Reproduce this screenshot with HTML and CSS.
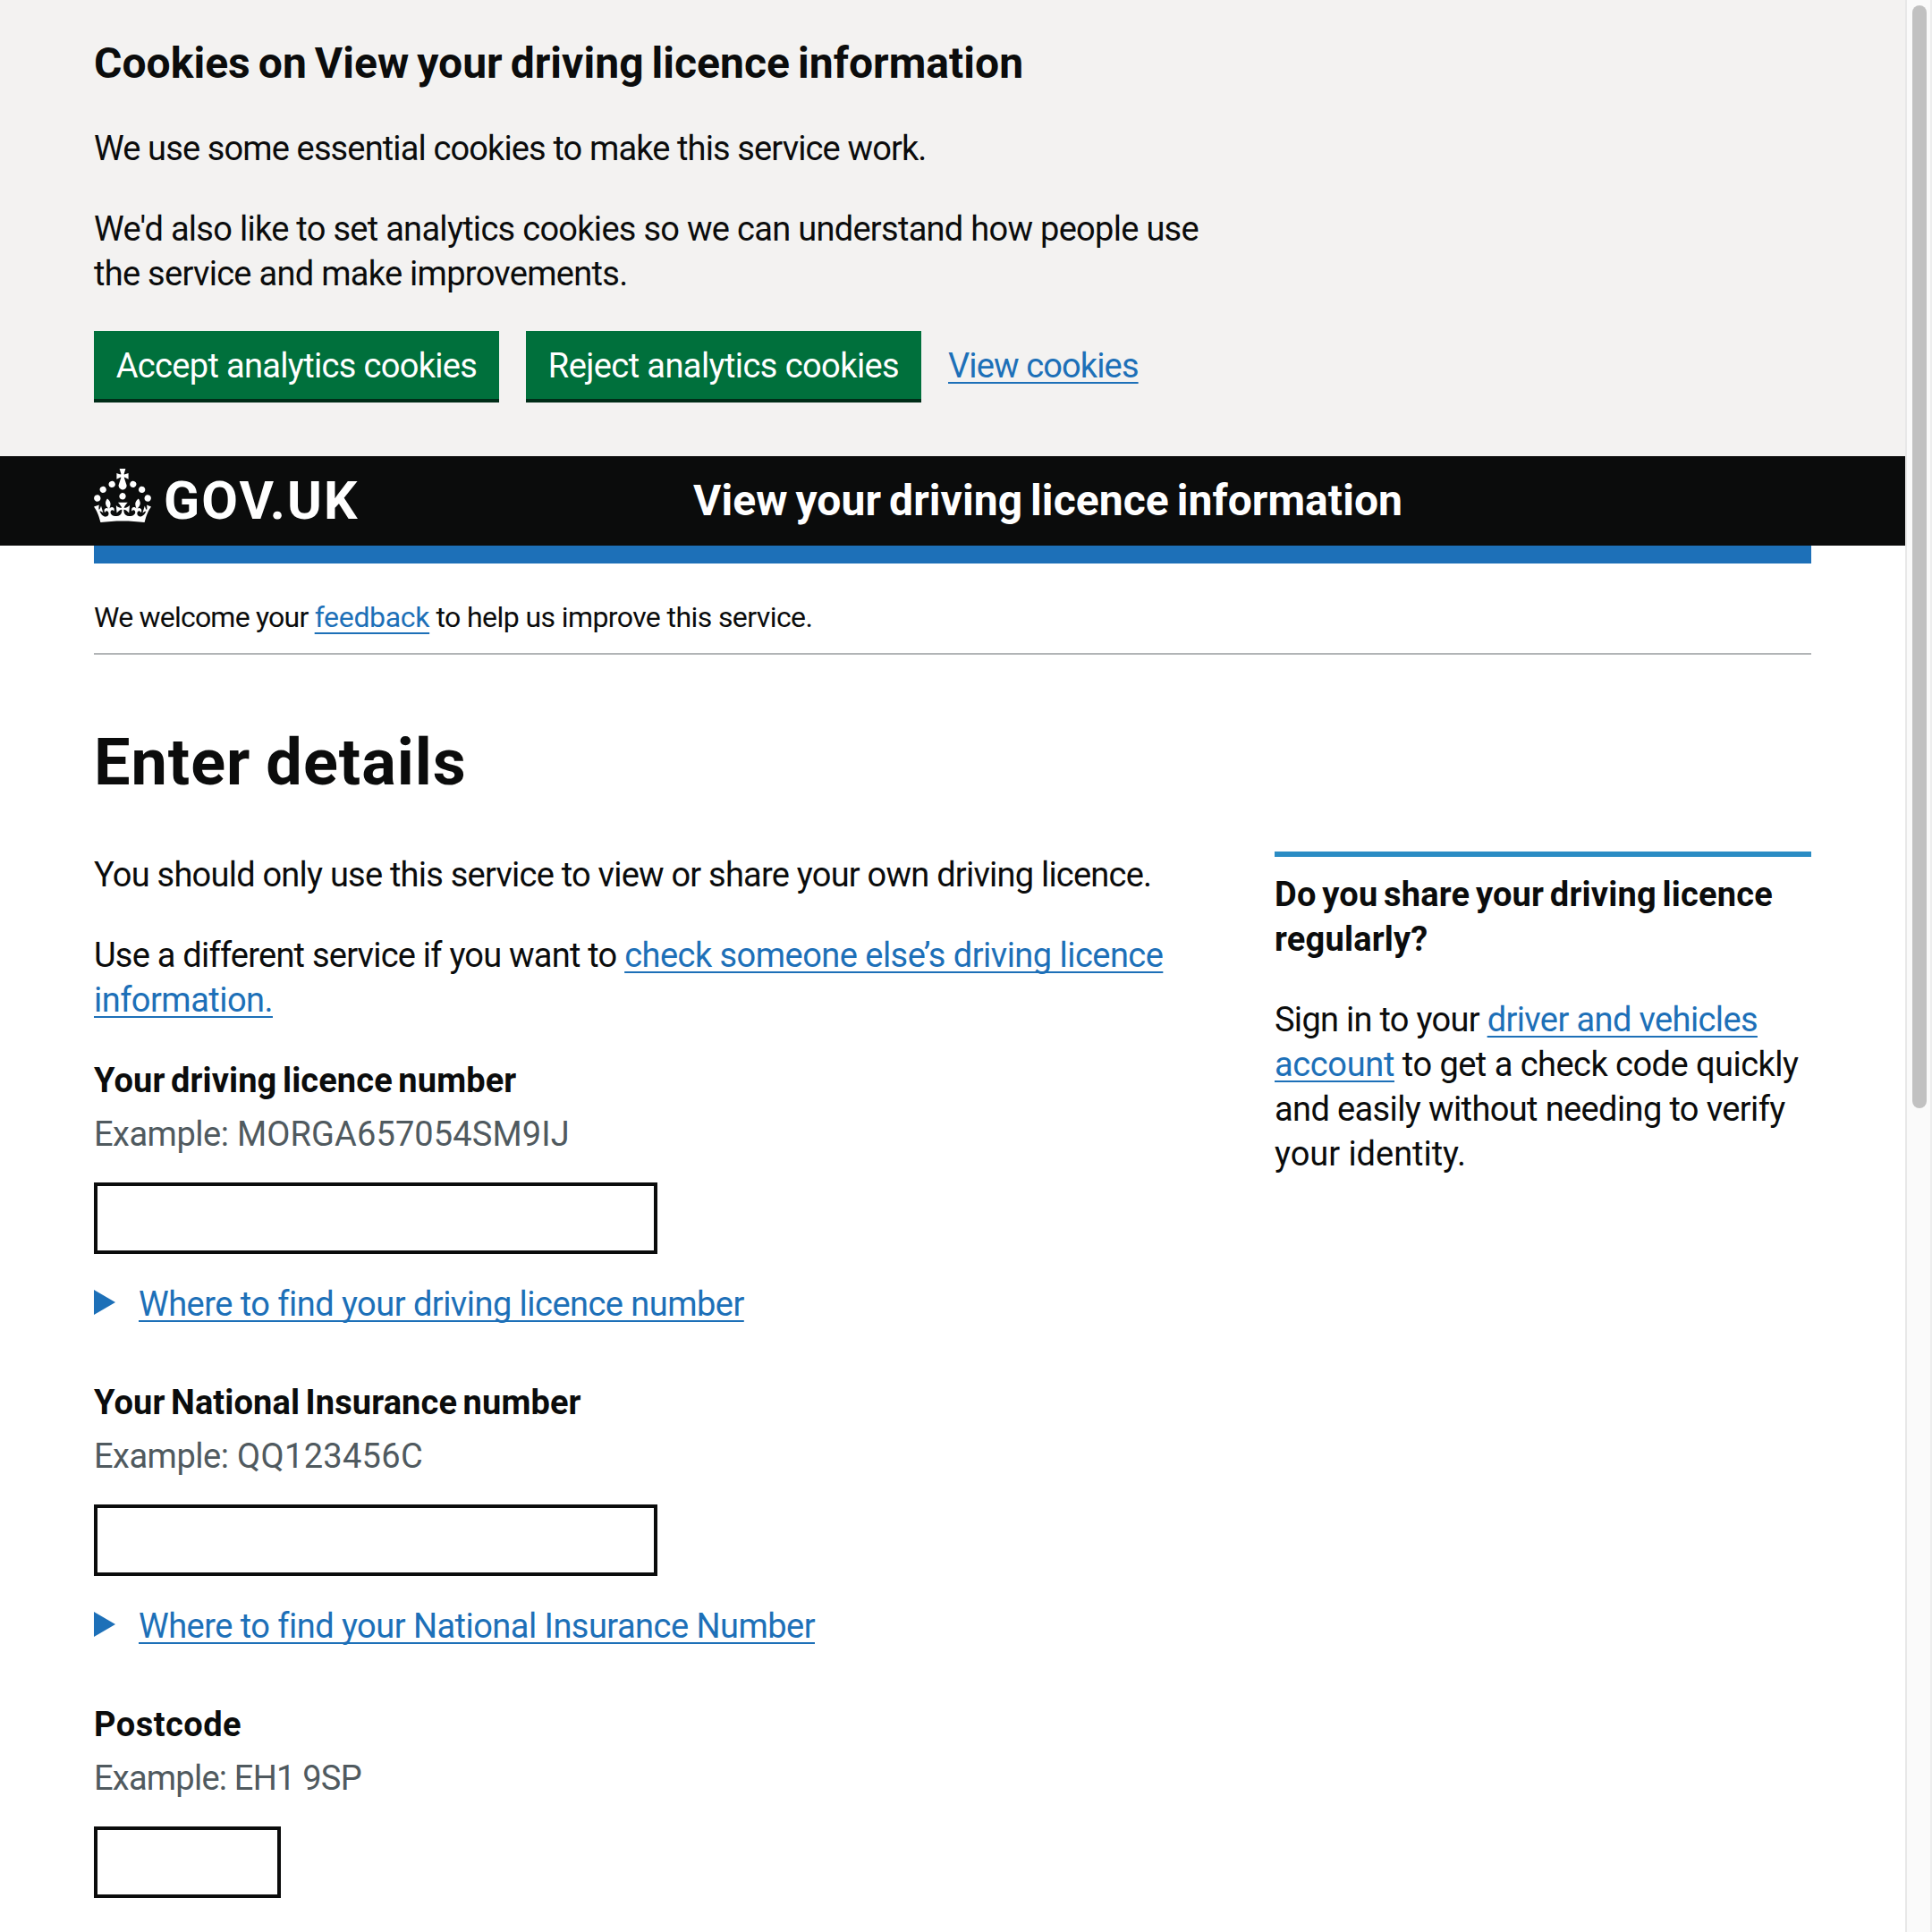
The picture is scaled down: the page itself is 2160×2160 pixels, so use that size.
FILE: index.html
```html
<!DOCTYPE html>
<html lang="en">
<head>
<meta charset="utf-8">
<title>Enter details - View your driving licence information - GOV.UK</title>
<link rel="stylesheet" href="styles.css">
</head>
<body>
<div class="window">
  <div class="page">
    <section class="cookies container">
      <h2 class="cookies-title">Cookies on View your driving licence information</h2>
      <p class="para track-9">We use some essential cookies to make this service work.</p>
      <p class="para"><span class="track-7">We'd also like to set analytics cookies so we can understand how people use</span><br><span class="track-7">the service and make improvements.</span></p>
      <div class="button-group">
        <button class="button accept">Accept analytics cookies</button>
        <button class="button reject">Reject analytics cookies</button>
        <a class="link track-9" href="#">View cookies</a>
      </div>
    </section>

    <header class="header container">
      <a class="logo" href="#">
        <svg class="crown" viewBox="0 0 32 30" fill="#fff" aria-hidden="true"><path d="M22.6 10.4c-1 .4-2-.1-2.4-1-.4-.9.1-2 1-2.4.9-.4 2 .1 2.4 1s-.1 2-1 2.4m-5.9 6.7c-.9.4-2-.1-2.4-1-.4-.9.1-2 1-2.4.9-.4 2 .1 2.4 1s-.1 2-1 2.4m10.8-3.7c-1 .4-2-.1-2.4-1-.4-.9.1-2 1-2.4.9-.4 2 .1 2.4 1s0 2-1 2.4m3.3 4.8c-1 .4-2-.1-2.4-1-.4-.9.1-2 1-2.4.9-.4 2 .1 2.4 1s-.1 2-1 2.4M17 4.7l2.3 1.2V2.5l-2.3.7-.2-.2.9-3h-3.4l.9 3-.2.2c-.1.1-2.3-.7-2.3-.7v3.4L15 4.7c.1.1.1.2.2.2l-1.3 4c-.1.2-.1.4-.1.6 0 1.1.8 2 1.9 2.2h.7c1-.2 1.9-1.1 1.9-2.1 0-.2 0-.4-.1-.6l-1.3-4c-.1-.2 0-.2.1-.3m-7.6 5.7c.9.4 2-.1 2.4-1 .4-.9-.1-2-1-2.4-.9-.4-2 .1-2.4 1s0 2 1 2.4m-5 3c.9.4 2-.1 2.4-1 .4-.9-.1-2-1-2.4-.9-.4-2 .1-2.4 1s.1 2 1 2.4m-3.2 4.8c.9.4 2-.1 2.4-1 .4-.9-.1-2-1-2.4-.9-.4-2 .1-2.4 1s0 2 1 2.4m14.8 11c4.4 0 8.6.3 12.3.8 1.1-4.5 2.4-7 3.7-8.8l-2.5-.9c.2 1.3.3 1.9 0 2.7-.4-.4-.8-1.1-1.1-2.3l-1.2 4c.7-.5 1.3-.8 2-.9-1.1 2.5-2.6 3.1-3.5 3-1.1-.2-1.7-1.2-1.5-2.1.3-1.2 1.5-1.5 2.1-.1 1.1-2.3-.8-3-2-2.3 1.9-1.9 2.1-3.5.6-5.6-2.1 1.6-2.1 3.2-1.2 5.5-1.2-1.4-3.2-.6-2.5 1.6.9-1.4 2.1-.5 1.9.8-.2 1.1-1.7 2.1-3.5 1.9-2.7-.2-2.9-2.1-2.9-3.6.7-.1 1.9.5 2.9 1.9l.4-4.3c-1.1 1.1-2.1 1.4-3.2 1.4.4-1.2 2.1-3 2.1-3h-5.4s1.7 1.9 2.1 3c-1.1 0-2.1-.2-3.2-1.4l.4 4.3c1-1.4 2.2-2 2.9-1.9-.1 1.5-.2 3.4-2.9 3.6-1.9.2-3.4-.8-3.5-1.9-.2-1.3 1-2.2 1.9-.8.7-2.3-1.2-3-2.5-1.6.9-2.2.9-3.9-1.2-5.5-1.5 2-1.3 3.7.6 5.6-1.2-.7-3.1 0-2 2.3.6-1.4 1.8-1.1 2.1.1.2.9-.3 1.9-1.5 2.1-.9.2-2.4-.5-3.5-3 .6 0 1.2.3 2 .9l-1.2-4c-.3 1.1-.7 1.9-1.1 2.3-.3-.8-.2-1.4 0-2.7l-2.9.9C1.3 23 2.6 25.5 3.7 30c3.7-.5 7.9-.8 12.3-.8"/></svg>
        <span class="logo-text">GOV.UK</span>
      </a>
      <span class="service-name">View your driving licence information</span>
    </header>

    <div class="body">
      <div class="header-bar"></div>
      <p class="feedback">We welcome your <a class="link feedback-link" href="#">feedback</a><span class="feedback-end"> to help us improve this service.</span></p>

      <h1 class="title">Enter details</h1>
      <div class="columns">
        <main class="main">
          <p class="para track-8">You should only use this service to view or share your own driving licence.</p>
          <p class="para"><span class="track-8">Use a different service if you want to </span><a class="link track-5" href="#">check someone else’s driving licence<br>information.</a></p>

          <div class="field">
            <label class="label" for="licence">Your driving licence number</label>
            <div class="hint"><span class="hint-lead">Example:</span> MORGA657054SM9IJ</div>
            <input class="input" id="licence" type="text">
            <div class="details"><span class="arrow"></span><a class="link track-5" href="#">Where to find your driving licence number</a></div>
          </div>
          <div class="field">
            <label class="label" for="nino">Your National Insurance number</label>
            <div class="hint hint-wide"><span class="hint-lead">Example:</span> QQ123456C</div>
            <input class="input" id="nino" type="text">
            <div class="details"><span class="arrow"></span><a class="link track-5" href="#">Where to find your National Insurance Number</a></div>
          </div>
          <div class="field">
            <label class="label label-wide" for="postcode">Postcode</label>
            <div class="hint track-8">Example: EH1 9SP</div>
            <input class="input input-short" id="postcode" type="text">
          </div>
        </main>

        <aside class="aside">
          <h2 class="aside-title">Do you share your driving licence regularly?</h2>
          <p class="para"><span class="track-7">Sign in to your </span><a class="link" href="#">driver and vehicles<br><span class="track-4">account</span></a><span class="track-5"> to get a check code quickly</span><br><span>and easily without needing to verify</span><br><span class="track-0">your identity.</span></p>
        </aside>
      </div>
    </div>
  </div>
  <div class="scrollbar"><div class="thumb"></div></div>
</div>
</body>
</html>
```
FILE: styles.css
```css
* { box-sizing: border-box; }

html, body { margin: 0; height: 100%; overflow: hidden; }

body {
  background: #fff;
  color: #0b0c0c;
  font: 400 38px/50px Roboto, "Liberation Sans", sans-serif;
  letter-spacing: -.62px;
}

h1, h2, p { margin: 0; }

.window { display: flex; height: 100vh; }
.page { flex: 1; overflow: hidden; }
.container { padding-left: 105px; padding-right: 105px; }

.link {
  color: #1d70b8;
  text-decoration: underline;
  text-decoration-thickness: 2px;
  text-underline-offset: 5px;
  text-decoration-skip-ink: none;
}

.para { margin-bottom: 40px; white-space: nowrap; }

/* letter fitting, in tenths of a pixel */
.track-0 { letter-spacing: -.04px; }
.track-4 { letter-spacing: -.36px; }
.track-5 { letter-spacing: -.53px; }
.track-7 { letter-spacing: -.71px; }
.track-8 { letter-spacing: -.77px; }
.track-9 { letter-spacing: -.87px; }

/* cookie banner */
.cookies { height: 510px; padding-top: 41px; background: #f3f2f1; }
.cookies-title {
  margin-bottom: 40px;
  font-size: 48px;
  line-height: 60px;
  letter-spacing: .04px;
  word-spacing: -3px;
}
.button-group { display: flex; align-items: flex-start; gap: 30px; margin-top: -1px; }
.button-group .link { padding-top: 14px; }
.button {
  height: 76px;
  padding: 2px 0 0;
  border: 0;
  background: #00703c;
  box-shadow: 0 4px 0 #002d18;
  color: #fff;
  font: inherit;
}
.accept { width: 453px; letter-spacing: -.67px; }
.reject { width: 442px; letter-spacing: -.58px; }

/* header */
.header {
  display: flex;
  height: 100px;
  background: #0b0c0c;
  color: #fff;
  white-space: nowrap;
}
.logo {
  display: flex;
  width: 670px;
  padding-top: 14px;
  color: #fff;
  text-decoration: none;
}
.crown { width: 64px; height: 60px; }
.logo-text {
  margin: 1px 0 0 14px;
  font-size: 59px;
  font-weight: 700;
  line-height: 70px;
  letter-spacing: 2.1px;
}
.service-name {
  padding-top: 20px;
  font-size: 48px;
  font-weight: 700;
  line-height: 60px;
  letter-spacing: .06px;
  word-spacing: -3px;
}

/* body */
.body { margin: 0 105px; }
.header-bar { height: 20px; background: #1d70b8; }
.feedback {
  height: 102px;
  padding-top: 40px;
  border-bottom: 2px solid #b1b4b6;
  font-size: 32px;
  line-height: 40px;
  letter-spacing: -.78px;
}
.feedback-link { letter-spacing: -.33px; text-underline-offset: 6px; }
.feedback-end { letter-spacing: -.59px; }
.title {
  margin: 81px 0 60px;
  font-size: 72px;
  line-height: 80px;
  letter-spacing: 1px;
  word-spacing: -2px;
}

.columns { display: grid; grid-template-columns: 1260px 600px; gap: 60px; }
.field { margin-bottom: 60px; }
.label {
  display: block;
  margin-bottom: 10px;
  font-weight: 700;
  letter-spacing: .11px;
  word-spacing: -3px;
}
.label-wide { letter-spacing: .47px; }
.hint { margin-bottom: 29px; color: #505a5f; letter-spacing: .12px; }
.hint-wide { letter-spacing: .3px; }
.hint.track-8 { letter-spacing: -.77px; }
.hint-lead { letter-spacing: -.5px; }
.input {
  display: block;
  width: 630px;
  height: 80px;
  border: 4px solid #0b0c0c;
  border-radius: 0;
  background: #fff;
}
.input-short { width: 209px; }
.details { display: flex; align-items: center; gap: 26px; margin-top: 31px; }
.arrow {
  width: 24px;
  height: 28px;
  margin-bottom: 4px;
  background: #1d70b8;
  clip-path: polygon(0 0, 100% 50%, 0 100%);
}

.aside { margin-top: -1px; }
.aside-title {
  padding-top: 17px;
  border-top: 6px solid #2b8cc4;
  margin-bottom: 40px;
  font-size: 38px;
  line-height: 50px;
  letter-spacing: .2px;
  word-spacing: -3px;
}

/* window scrollbar */
.scrollbar {
  width: 30px;
  padding: 6px 4px 0 6px;
  border-left: 2px solid #e8e8e8;
  border-right: 2px solid #ededed;
  background: #fafafa;
}
.thumb { width: 16px; height: 1233px; border-radius: 8px; background: #c1c1c1; }
```
